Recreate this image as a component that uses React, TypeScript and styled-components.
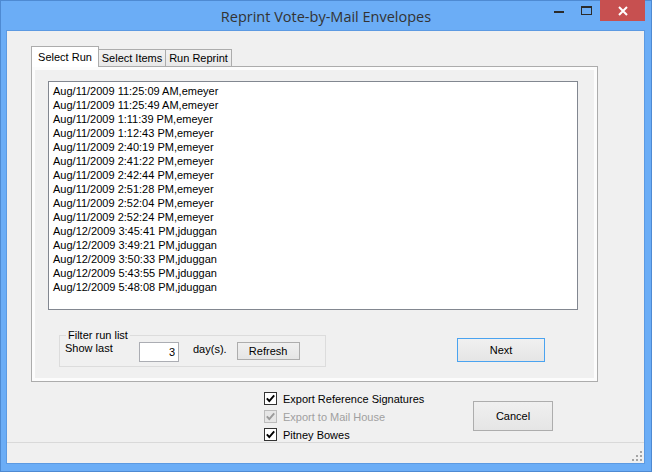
import React from "react";
import styled, { createGlobalStyle } from "styled-components";

const GlobalStyle = createGlobalStyle`
  html, body {
    margin: 0;
    padding: 0;
    background: #ffffff;
  }
  body {
    font-family: "Liberation Sans", Arial, sans-serif;
    font-size: 11px;
    color: #000;
  }
`;

const Window = styled.div`
  width: 652px;
  height: 472px;
  box-sizing: border-box;
  border: 1px solid #4e8ad2;
  background: #6badf6;
  display: flex;
  flex-direction: column;
`;

const TitleBar = styled.div`
  height: 29px;
  flex-shrink: 0;
  display: grid;
  grid-template-columns: 1fr auto 1fr;
  align-items: start;
  padding: 0 6px;
`;

const Title = styled.div`
  grid-column: 2;
  margin-top: 6px;
  line-height: 20px;
  font-family: "Open Sans", "Noto Sans", sans-serif;
  font-size: 14.5px;
  color: #333;
  white-space: nowrap;
`;

const Controls = styled.div`
  grid-column: 3;
  justify-self: end;
  display: flex;
  margin-top: -1px;
`;

const CtrlButton = styled.div<{ $w: number; $danger?: boolean }>`
  width: ${(p) => p.$w}px;
  height: 21px;
  display: flex;
  align-items: center;
  justify-content: center;
  background: ${(p) => (p.$danger ? "#c75050" : "transparent")};
`;

const Client = styled.div`
  flex: 1;
  min-height: 0;
  margin: 0 6px 7px 5px;
  border: 1px solid #5c9ae2;
  background: #f0f0f0;
  display: flex;
  flex-direction: column;
`;

const Body = styled.div`
  flex: 1 1 auto;
  min-height: 0;
  padding: 15px 0 0 24px;
  display: flex;
  flex-direction: column;
`;

const TabStrip = styled.div`
  height: 20px;
  flex-shrink: 0;
  display: flex;
  align-items: flex-end;
  position: relative;
  z-index: 1;
`;

const Tab = styled.div<{ $active?: boolean; $w: number }>`
  box-sizing: border-box;
  width: ${(p) => p.$w}px;
  height: ${(p) => (p.$active ? 21 : 17)}px;
  margin-bottom: ${(p) => (p.$active ? -1 : 0)}px;
  border: 1px solid #acacac;
  border-bottom: none;
  margin-left: ${(p) => (p.$active ? 0 : -1)}px;
  background: ${(p) =>
    p.$active ? "#ffffff" : "linear-gradient(#f2f2f2, #e8e8e8)"};
  display: flex;
  align-items: center;
  justify-content: center;
  white-space: nowrap;
  &:first-child {
    margin-left: 0;
  }
`;

const Panel = styled.div`
  box-sizing: border-box;
  width: 567px;
  height: 316px;
  flex-shrink: 0;
  border: 1px solid #acacac;
  background: #f0f0f0;
  box-shadow: inset 0 0 0 3px #fcfcfc;
  padding: 14px 19px 0 16px;
  display: flex;
  flex-direction: column;
`;

const ListBox = styled.div`
  box-sizing: border-box;
  height: 229px;
  flex-shrink: 0;
  border: 1px solid #828790;
  background: #fff;
  padding: 2px 4px;
  line-height: 14px;
  overflow: hidden;
`;

const ListItem = styled.div`
  white-space: nowrap;
`;

const PanelFooter = styled.div`
  display: flex;
  justify-content: space-between;
  align-items: flex-start;
  margin-top: 19px;
  padding: 0 33px 0 11px;
`;

const FilterGroup = styled.fieldset`
  box-sizing: border-box;
  width: 267px;
  min-width: 0;
  margin: 0;
  padding: 0 0 4px 5px;
  border: 1px solid #dcdcdc;
`;

const Legend = styled.legend`
  padding: 0 2px;
  margin-left: 1px;
  line-height: 13px;
`;

const FilterRow = styled.div`
  display: flex;
  align-items: flex-start;
`;

const ShowLabel = styled.span`
  width: 74px;
  line-height: 13px;
`;

const DaysInput = styled.input`
  box-sizing: border-box;
  width: 40px;
  height: 20px;
  margin: 0;
  border: 1px solid #abadb3;
  background: #fff;
  padding: 0 3px 0 0;
  text-align: right;
  font-family: "Liberation Sans", Arial, sans-serif;
  font-size: 11px;
  color: #000;
  outline: none;
`;

const DaysLabel = styled.span`
  margin: 1px 0 0 14px;
  line-height: 13px;
`;

const Button = styled.button<{ $w: number; $h: number; $default?: boolean }>`
  box-sizing: border-box;
  width: ${(p) => p.$w}px;
  height: ${(p) => p.$h}px;
  padding: 0;
  border: 1px solid ${(p) => (p.$default ? "#4aa3f0" : "#adadad")};
  background: linear-gradient(#f0f0f0, #e5e5e5);
  font-family: "Liberation Sans", Arial, sans-serif;
  font-size: 11px;
  color: #000;
  flex-shrink: 0;
`;

const RefreshButton = styled(Button)`
  margin-left: 10px;
`;

const NextButton = styled(Button)`
  margin-top: 9px;
`;

const BottomArea = styled.div`
  display: flex;
  align-items: flex-start;
  margin-top: 10px;
  padding-left: 233px;
  flex-shrink: 0;
`;

const CheckList = styled.div`
  width: 209px;
  display: flex;
  flex-direction: column;
  gap: 5px;
`;

const CheckRow = styled.div<{ $disabled?: boolean }>`
  display: flex;
  align-items: center;
  height: 13px;
  color: ${(p) => (p.$disabled ? "#a0a0a0" : "#000")};
  white-space: nowrap;
`;

const Box = styled.span<{ $disabled?: boolean }>`
  box-sizing: border-box;
  width: 13px;
  height: 13px;
  margin-right: 6px;
  border: 1px solid ${(p) => (p.$disabled ? "#bcbcbc" : "#333")};
  background: ${(p) => (p.$disabled ? "#e6e6e6" : "#fff")};
  display: flex;
  align-items: center;
  justify-content: center;
`;

const CancelButton = styled(Button)`
  margin-top: 9px;
`;

const StatusStrip = styled.div`
  height: 21px;
  flex-shrink: 0;
  box-sizing: border-box;
  border-top: 1px solid #d9d9d9;
  display: flex;
  justify-content: flex-end;
  align-items: flex-end;
  padding: 0 2px 2px 0;
`;

const runs = [
  "Aug/11/2009 11:25:09 AM,emeyer",
  "Aug/11/2009 11:25:49 AM,emeyer",
  "Aug/11/2009 1:11:39 PM,emeyer",
  "Aug/11/2009 1:12:43 PM,emeyer",
  "Aug/11/2009 2:40:19 PM,emeyer",
  "Aug/11/2009 2:41:22 PM,emeyer",
  "Aug/11/2009 2:42:44 PM,emeyer",
  "Aug/11/2009 2:51:28 PM,emeyer",
  "Aug/11/2009 2:52:04 PM,emeyer",
  "Aug/11/2009 2:52:24 PM,emeyer",
  "Aug/12/2009 3:45:41 PM,jduggan",
  "Aug/12/2009 3:49:21 PM,jduggan",
  "Aug/12/2009 3:50:33 PM,jduggan",
  "Aug/12/2009 5:43:55 PM,jduggan",
  "Aug/12/2009 5:48:08 PM,jduggan",
];

const options = [
  { label: "Export Reference Signatures", disabled: false },
  { label: "Export to Mail House", disabled: true },
  { label: "Pitney Bowes", disabled: false },
];

const Check = ({ disabled }: { disabled?: boolean }) => (
  <Box $disabled={disabled}>
    <svg width="11" height="11" viewBox="0 0 11 11">
      <path
        d="M1.8 5.4 L4.3 8 L9.2 2.3"
        fill="none"
        stroke={disabled ? "#9a9a9a" : "#000"}
        strokeWidth="1.9"
      />
    </svg>
  </Box>
);

const Grip = () => (
  <svg width="10" height="10" viewBox="0 0 10 10">
    {[
      [8, 0],
      [4, 4],
      [8, 4],
      [0, 8],
      [4, 8],
      [8, 8],
    ].map(([x, y]) => (
      <rect key={`${x}-${y}`} x={x} y={y} width="2" height="2" fill="#a4a4a4" />
    ))}
  </svg>
);

export default function App() {
  return (
    <>
      <GlobalStyle />
      <Window>
        <TitleBar>
          <Title>Reprint Vote-by-Mail Envelopes</Title>
          <Controls>
            <CtrlButton $w={26}>
              <svg width="10" height="10" viewBox="0 0 10 10">
                <rect x="0" y="5" width="10" height="2" fill="#2b2b2b" />
              </svg>
            </CtrlButton>
            <CtrlButton $w={28}>
              <svg width="11" height="9" viewBox="0 0 11 9">
                <rect x="0.5" y="0.5" width="10" height="8" fill="none" stroke="#2b2b2b" />
                <rect x="0" y="0" width="11" height="2" fill="#2b2b2b" />
              </svg>
            </CtrlButton>
            <CtrlButton $w={45} $danger>
              <svg width="10" height="10" viewBox="0 0 10 10">
                <path d="M1 1 L9 9 M9 1 L1 9" stroke="#fff" strokeWidth="2" />
              </svg>
            </CtrlButton>
          </Controls>
        </TitleBar>
        <Client>
          <Body>
            <TabStrip>
              <Tab $active $w={68}>Select Run</Tab>
              <Tab $w={68}>Select Items</Tab>
              <Tab $w={67}>Run Reprint</Tab>
            </TabStrip>
            <Panel>
              <ListBox>
                {runs.map((r) => (
                  <ListItem key={r}>{r}</ListItem>
                ))}
              </ListBox>
              <PanelFooter>
                <FilterGroup>
                  <Legend>Filter run list</Legend>
                  <FilterRow>
                    <ShowLabel>Show last</ShowLabel>
                    <DaysInput defaultValue="3" />
                    <DaysLabel>day(s).</DaysLabel>
                    <RefreshButton $w={63} $h={18}>
                      Refresh
                    </RefreshButton>
                  </FilterRow>
                </FilterGroup>
                <NextButton $w={88} $h={24} $default>
                  Next
                </NextButton>
              </PanelFooter>
            </Panel>
            <BottomArea>
              <CheckList>
                {options.map((o) => (
                  <CheckRow key={o.label} $disabled={o.disabled}>
                    <Check disabled={o.disabled} />
                    {o.label}
                  </CheckRow>
                ))}
              </CheckList>
              <CancelButton $w={80} $h={30}>
                Cancel
              </CancelButton>
            </BottomArea>
          </Body>
          <StatusStrip>
            <Grip />
          </StatusStrip>
        </Client>
      </Window>
    </>
  );
}
